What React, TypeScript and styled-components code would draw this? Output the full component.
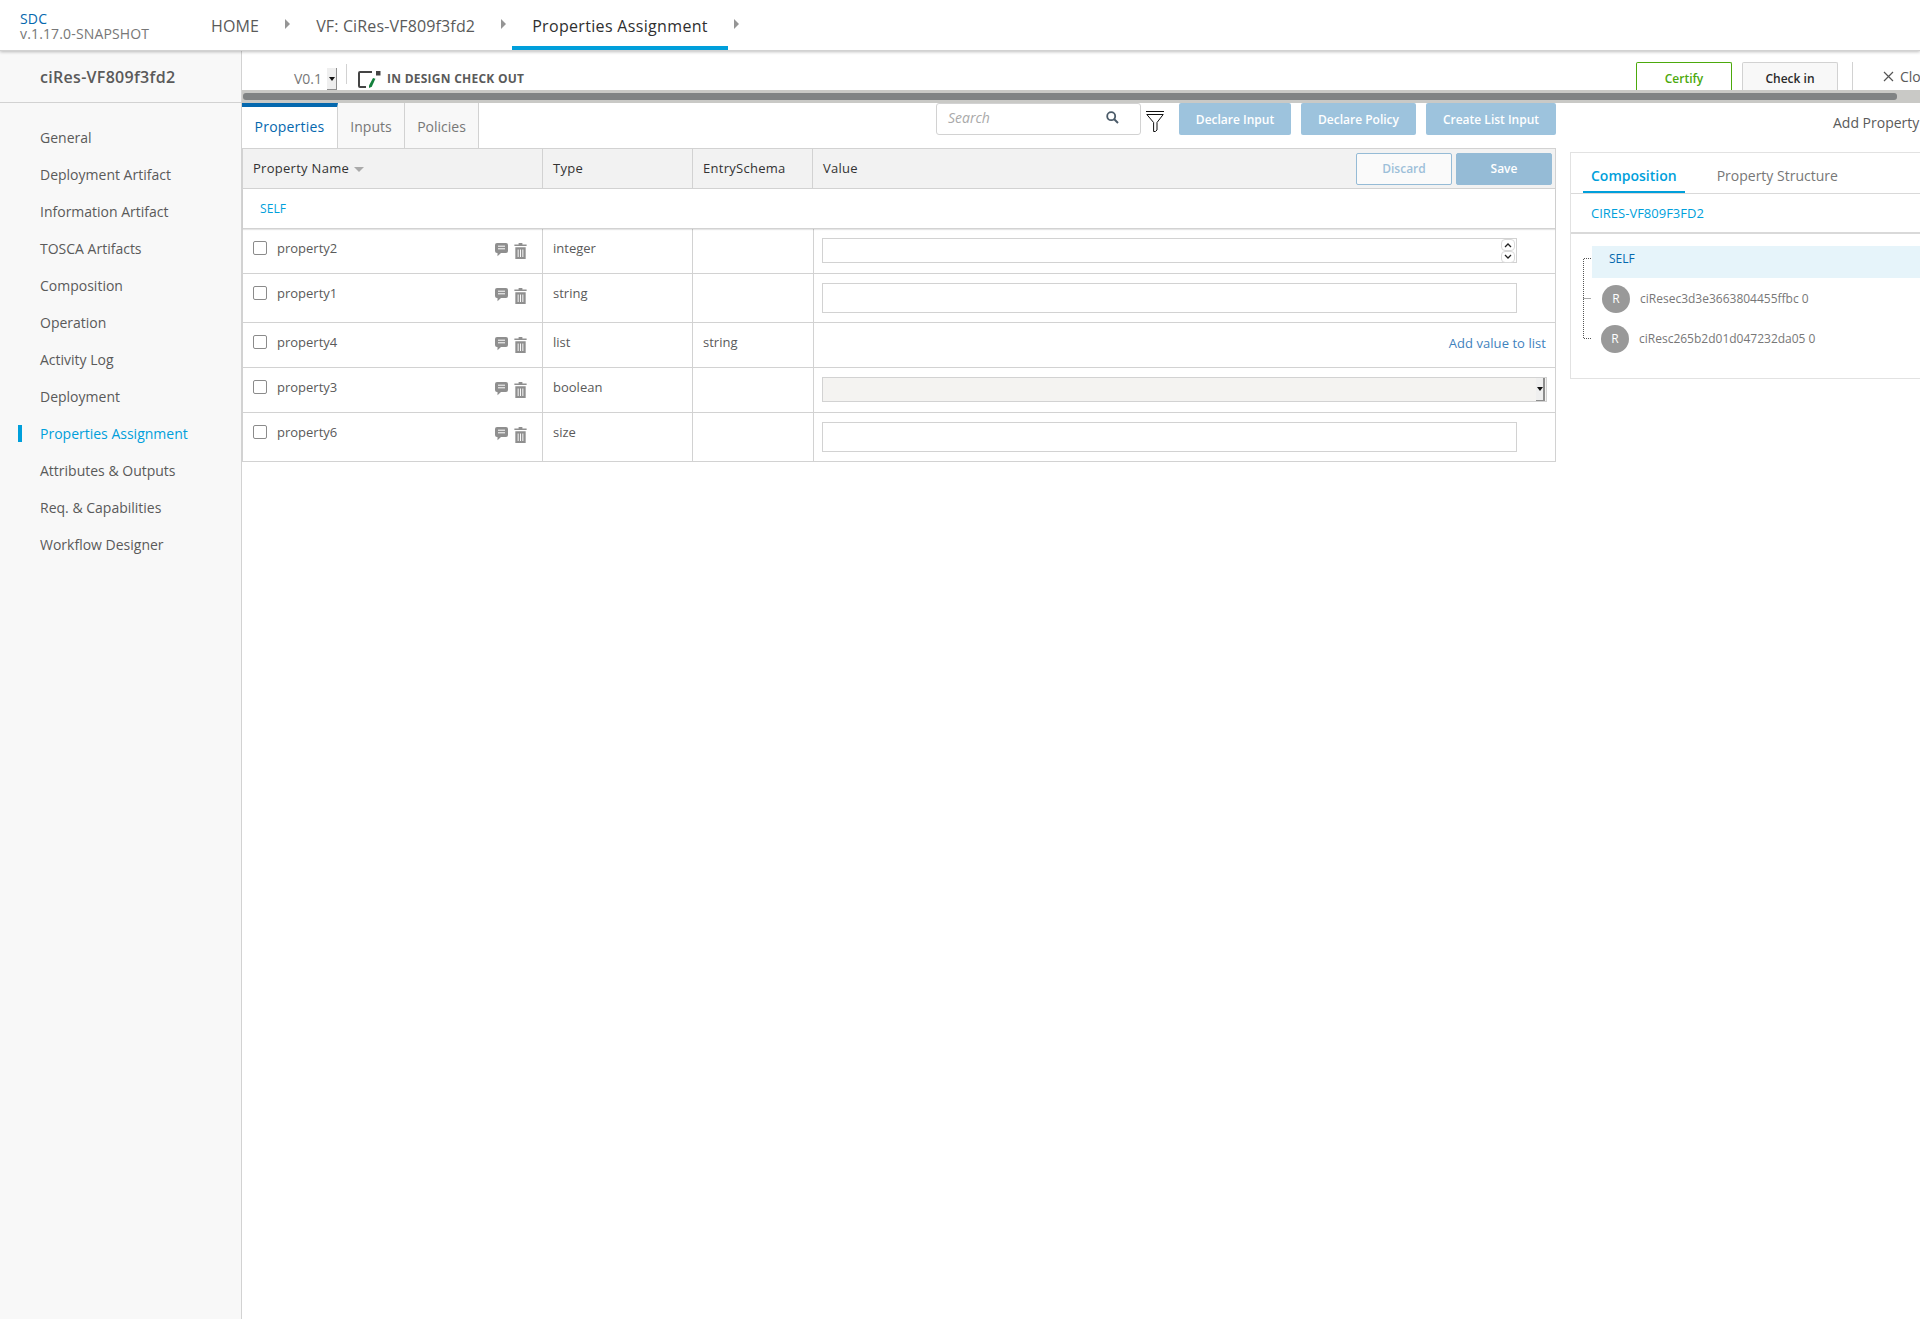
import * as React from "react";
import styled, { createGlobalStyle } from "styled-components";

const GlobalStyle = createGlobalStyle`
  html, body {
    margin: 0;
    height: 1319px;
    overflow: hidden;
    background: white;
    font-family: "Open Sans", "Liberation Sans", sans-serif;
    color: #5a5a5a;
  }
  * { box-sizing: border-box; }
`;

const Page = styled.div`
  width: 1920px;
  height: 1319px;
  overflow: hidden;
  display: flex;
  flex-direction: column;
`;

const Header = styled.header`
  flex: none;
  height: 51px;
  display: flex;
  background: white;
  border-bottom: 1px solid #d2d2d2;
  box-shadow: 0 1px 3px rgba(0, 0, 0, 0.25);
  position: relative;
  z-index: 2;
`;

const Brand = styled.div`
  width: 191px;
  padding: 11px 0 0 20px;
  font-size: 14px;
  line-height: 15px;
  letter-spacing: 0.15px;
  color: #777;
  & b {
    display: block;
    font-weight: 400;
    color: #0568ae;
  }
`;

const Crumb = styled.div<{ $active?: boolean }>`
  height: 50px;
  padding: 5px 20px 0;
  display: flex;
  align-items: center;
  font-size: 16px;
  letter-spacing: ${(p) => (p.$active ? 0.33 : 0.15)}px;
  color: ${(p) => (p.$active ? "#2f2f2f" : "#5a5a5a")};
  border-bottom: 4px solid ${(p) => (p.$active ? "#009fdb" : "transparent")};
`;

const CrumbArrow = styled.span`
  width: 0;
  height: 0;
  margin: 19px 6px 0;
  border-left: 5px solid #959595;
  border-top: 5px solid transparent;
  border-bottom: 5px solid transparent;
`;

const Body = styled.div`
  flex: 1;
  display: flex;
  min-height: 0;
`;

const Sidebar = styled.aside`
  flex: none;
  width: 242px;
  background: #f8f8f8;
  border-right: 1px solid #d2d2d2;
`;

const SideTitle = styled.div`
  height: 52px;
  padding-left: 40px;
  display: flex;
  align-items: center;
  font-size: 16px;
  font-weight: 600;
  letter-spacing: 0.3px;
  color: #5a5a5a;
  border-bottom: 1px solid #d2d2d2;
`;

const SideMenu = styled.nav`
  padding-top: 16px;
`;

const SideItem = styled.div<{ $active?: boolean }>`
  height: 37px;
  padding-left: 40px;
  display: flex;
  align-items: center;
  font-size: 14px;
  position: relative;
  color: ${(p) => (p.$active ? "#009fdb" : "#5a5a5a")};
  &::before {
    content: "";
    display: ${(p) => (p.$active ? "block" : "none")};
    position: absolute;
    left: 18px;
    top: 10px;
    width: 4px;
    height: 17px;
    background: #009fdb;
  }
`;

const Main = styled.main`
  flex: 1;
  min-width: 0;
  display: flex;
  flex-direction: column;
`;

const TopBar = styled.div`
  height: 39px;
  display: flex;
  align-items: flex-end;
`;

const VersionText = styled.div`
  margin-left: 52px;
  height: 22px;
  font-size: 14px;
  line-height: 22px;
  color: #777;
`;

const VersionButton = styled.span`
  width: 10px;
  height: 22px;
  margin-left: 5px;
  background: #efefef;
  border-right: 1px solid #8e8e8e;
  border-bottom: 1px solid #8e8e8e;
  display: flex;
  align-items: center;
  justify-content: center;
  &::after {
    content: "";
    border-top: 4px solid #111;
    border-left: 3px solid transparent;
    border-right: 3px solid transparent;
  }
`;

const TopDivider = styled.span<{ $h: number; $ml: number; $mb: number }>`
  width: 1px;
  height: ${(p) => p.$h}px;
  margin-left: ${(p) => p.$ml}px;
  margin-bottom: ${(p) => p.$mb}px;
  background: #d2d2d2;
`;

const StateIcon = styled.svg`
  width: 24px;
  height: 20px;
  margin-left: 10px;
  margin-bottom: 2px;
`;

const StateText = styled.div`
  margin-left: 6px;
  margin-bottom: 1px;
  font-size: 12px;
  line-height: 20px;
  font-weight: 700;
  letter-spacing: 0.25px;
  color: #5a5a5a;
`;

const TopSpacer = styled.div`
  flex: 1;
`;

const TopButton = styled.div<{ $certify?: boolean }>`
  width: 96px;
  height: 28px;
  margin-right: 10px;
  padding-top: 4px;
  display: flex;
  align-items: center;
  justify-content: center;
  font-size: 12px;
  font-weight: 600;
  border: 1px solid ${(p) => (p.$certify ? "#4ca90c" : "#d2d2d2")};
  border-bottom: 0;
  border-radius: 2px 2px 0 0;
  background: ${(p) => (p.$certify ? "white" : "#f8f8f8")};
  color: ${(p) => (p.$certify ? "#4ca90c" : "#2a2a2a")};
`;

const CloseBox = styled.div`
  width: 67px;
  flex: none;
  height: 28px;
  padding-left: 30px;
  display: flex;
  align-items: center;
  font-size: 14px;
  white-space: nowrap;
  color: #5a5a5a;
  & svg {
    flex: none;
    margin-right: 6px;
  }
`;

const ScrollTrack = styled.div`
  height: 13px;
  padding: 3px 0 0 1px;
  background: #c9c9c6;
`;

const ScrollThumb = styled.div`
  width: 1654px;
  height: 7px;
  border-radius: 3px;
  background: #808384;
`;

const Work = styled.div`
  display: flex;
`;

const Left = styled.section`
  flex: none;
  width: 1314px;
`;

const Toolbar = styled.div`
  height: 45px;
  display: flex;
`;

const Tab = styled.div<{ $active?: boolean; $w: number }>`
  width: ${(p) => p.$w}px;
  padding-top: ${(p) => (p.$active ? 10 : 14)}px;
  text-align: center;
  font-size: 14px;
  line-height: 20px;
  letter-spacing: ${(p) => (p.$active ? 0.2 : 0)}px;
  color: ${(p) => (p.$active ? "#0568ae" : "#777")};
  background: ${(p) => (p.$active ? "white" : "#f8f8f8")};
  border-top: ${(p) => (p.$active ? "4px solid #0568ae" : "0")};
  border-right: 1px solid #d2d2d2;
`;

const ToolActions = styled.div`
  flex: 1;
  display: flex;
  justify-content: flex-end;
  align-items: flex-start;
`;

const SearchBox = styled.div`
  width: 205px;
  height: 32px;
  padding: 0 12px 3px 11px;
  display: flex;
  align-items: center;
  justify-content: space-between;
  border: 1px solid #d2d2d2;
  border-radius: 3px;
  font-size: 14px;
  font-style: italic;
  color: #a9a9a9;
  & svg {
    margin-right: 9px;
  }
`;

const FilterIcon = styled.svg`
  width: 18px;
  height: 21px;
  margin: 8px 5px 0 5px;
`;

const ActionButton = styled.div<{ $w: number }>`
  width: ${(p) => p.$w}px;
  height: 32px;
  margin-left: 10px;
  display: flex;
  align-items: center;
  justify-content: center;
  border-radius: 2px;
  font-size: 12px;
  font-weight: 600;
  color: white;
  background: #9dc3dd;
`;

const Table = styled.div`
  border: 1px solid #d2d2d2;
  border-bottom: 0;
`;

const HeadRow = styled.div`
  height: 40px;
  display: grid;
  grid-template-columns: 300px 150px 120px 1fr;
  background: #f2f2f2;
  border-bottom: 1px solid #d2d2d2;
`;

const HeadCell = styled.div`
  padding: 0 3px 1px 10px;
  display: flex;
  align-items: center;
  font-size: 13px;
  letter-spacing: 0.28px;
  color: #333;
  border-right: 1px solid #d2d2d2;
  &:last-child {
    border-right: 0;
  }
`;

const SortMark = styled.span`
  margin-left: 5px;
  margin-top: 2px;
  border-top: 5px solid #aaa;
  border-left: 5px solid transparent;
  border-right: 5px solid transparent;
`;

const HeadSpacer = styled.span`
  flex: 1;
`;

const HeadButton = styled.div<{ $solid?: boolean }>`
  width: 96px;
  height: 32px;
  margin: 1px 0 0 4px;
  display: flex;
  align-items: center;
  justify-content: center;
  font-size: 12px;
  font-weight: 600;
  letter-spacing: 0;
  border-radius: 2px;
  border: 1px solid #95bbd6;
  color: ${(p) => (p.$solid ? "white" : "#9dbfd9")};
  background: ${(p) => (p.$solid ? "#95bbd6" : "#fafafa")};
`;

const GroupRow = styled.div`
  height: 40px;
  padding-left: 17px;
  display: flex;
  align-items: center;
  font-size: 12px;
  letter-spacing: 0.1px;
  color: #009fdb;
  border-bottom: 1px solid #d2d2d2;
  box-shadow: 0 1px 1px rgba(0, 0, 0, 0.1);
  position: relative;
`;

const Row = styled.div<{ $h: number }>`
  height: ${(p) => p.$h}px;
  display: grid;
  grid-template-columns: 300px 150px 121px 1fr;
  border-bottom: 1px solid #d2d2d2;
  font-size: 13px;
`;

const NameCell = styled.div`
  padding: 9px 15px 0 10px;
  display: flex;
  align-items: flex-start;
  border-right: 1px solid #d2d2d2;
`;

const Check = styled.input.attrs({ type: "checkbox" })`
  appearance: none;
  flex: none;
  width: 14px;
  height: 14px;
  margin: 3px 10px 0 0;
  background: white;
  border: 1px solid #8b8b8b;
  border-radius: 2px;
`;

const PropName = styled.span`
  flex: 1;
  line-height: 20px;
`;

const RowIcons = styled.span`
  display: flex;
  align-items: flex-start;
  gap: 6px;
  padding-top: 5px;
`;

const Cell = styled.div`
  padding: 9px 10px 0 10px;
  line-height: 20px;
  border-right: 1px solid #d2d2d2;
`;

const ValueCell = styled.div<{ $end?: boolean }>`
  padding: 9px 9px 0 8px;
  display: flex;
  justify-content: ${(p) => (p.$end ? "flex-end" : "flex-start")};
  align-items: flex-start;
`;

const ValueInput = styled.input`
  display: block;
  width: 695px;
  height: 30px;
  padding: 0 5px;
  background: white;
  border: 1px solid #d2d2d2;
  border-radius: 0;
  outline: 0;
  font: inherit;
`;

const NumberField = styled.div`
  width: 695px;
  height: 25px;
  padding-right: 1px;
  display: flex;
  align-items: center;
  border: 1px solid #d2d2d2;
`;

const NumberInput = styled.input`
  flex: 1;
  min-width: 0;
  height: 100%;
  padding: 0 5px;
  border: 0;
  outline: 0;
  font: inherit;
`;

const Spinner = styled.span`
  flex: none;
  display: flex;
  flex-direction: column;
`;

const SpinButton = styled.span`
  width: 14px;
  height: 12px;
  display: flex;
  align-items: center;
  justify-content: center;
  border: 1px solid #d9d9d9;
  border-radius: 4px;
`;

const ValueSelect = styled.div`
  width: 725px;
  height: 25px;
  display: flex;
  justify-content: flex-end;
  padding-right: 1px;
  background: #f4f3f1;
  border: 1px solid #d2d2d2;
`;

const SelectButton = styled.span`
  width: 9px;
  background: #efefef;
  border-right: 2px solid #8e8e8e;
  border-bottom: 1px solid #8e8e8e;
  display: flex;
  align-items: center;
  justify-content: center;
  &::after {
    content: "";
    border-top: 4px solid #111;
    border-left: 3px solid transparent;
    border-right: 3px solid transparent;
  }
`;

const AddLink = styled.a`
  margin-top: 1px;
  font-size: 13px;
  line-height: 20px;
  letter-spacing: 0.05px;
  color: #3f82bd;
`;

const Right = styled.aside`
  flex: 1;
  min-width: 0;
  padding-left: 14px;
`;

const AddProperty = styled.div`
  height: 49px;
  padding: 10px 0 0 263px;
  font-size: 14px;
  line-height: 20px;
  white-space: nowrap;
  color: #5a5a5a;
`;

const Panel = styled.div`
  height: 227px;
  width: 352px;
  border: 1px solid #e2e2e2;
`;

const PanelTabs = styled.div`
  height: 41px;
  display: flex;
  padding-left: 12px;
  border-bottom: 1px solid #d9d9d9;
`;

const PanelTab = styled.div<{ $active?: boolean }>`
  padding: ${(p) => (p.$active ? 6 : 4)}px 8px 0;
  margin-right: 24px;
  height: 40px;
  display: flex;
  align-items: center;
  font-size: 14px;
  font-weight: ${(p) => (p.$active ? 600 : 400)};
  color: ${(p) => (p.$active ? "#009fdb" : "#777")};
  border-bottom: ${(p) => (p.$active ? "2px solid #009fdb" : "0")};
`;

const PanelCrumb = styled.div`
  height: 40px;
  padding-left: 20px;
  display: flex;
  align-items: center;
  font-size: 13px;
  color: #009fdb;
  border-bottom: 2px solid #d9d9d9;
`;

const Tree = styled.div`
  padding: 12px 0 0 21px;
  position: relative;
`;

const TreeLines = styled.svg`
  position: absolute;
  left: 12px;
  top: 22px;
  width: 10px;
  height: 84px;
`;

const TreeSelf = styled.div`
  height: 32px;
  padding: 0 0 8px 17px;
  display: flex;
  align-items: center;
  font-size: 12px;
  color: #0568ae;
  background: #e6f4fa;
`;

const TreeNode = styled.div<{ $ml: number }>`
  height: 40px;
  margin-left: ${(p) => p.$ml}px;
  padding: 7px 0 5px;
  display: flex;
  align-items: center;
  font-size: 12px;
  line-height: 18px;
  color: #777;
`;

const NodeBadge = styled.span`
  flex: none;
  width: 28px;
  height: 28px;
  margin-right: 10px;
  border-radius: 50%;
  display: flex;
  align-items: center;
  justify-content: center;
  font-size: 12px;
  color: white;
  background: #999;
`;

const CommentIcon = () => (
  <svg width="13" height="14" viewBox="0 0 13 14">
    <path
      d="M2 0h9a2 2 0 0 1 2 2v6a2 2 0 0 1-2 2H6l-3.5 3.2V10H2a2 2 0 0 1-2-2V2a2 2 0 0 1 2-2z"
      fill="#8f8f8f"
    />
    <path d="M3 3.2h7M3 5.8h7" stroke="white" strokeWidth="1" />
  </svg>
);

const TrashIcon = () => (
  <svg width="13" height="16" viewBox="0 0 13 17">
    <path
      d="M4.5 0h4v1.5H13V3.2H0V1.5h4.5zM1 4.5h11V17H1zM3.5 7v8h1V7zM6 7v8h1V7zM8.5 7v8h1V7z"
      fill="#8f8f8f"
      fillRule="evenodd"
    />
  </svg>
);

const Chevron = ({ up }: { up?: boolean }) => (
  <svg width="8" height="6" viewBox="0 0 8 6">
    <path
      d={up ? "M1 5l3-3 3 3" : "M1 1l3 3 3-3"}
      fill="none"
      stroke="#222"
      strokeWidth="1.3"
    />
  </svg>
);

const menu = [
  "General",
  "Deployment Artifact",
  "Information Artifact",
  "TOSCA Artifacts",
  "Composition",
  "Operation",
  "Activity Log",
  "Deployment",
  "Properties Assignment",
  "Attributes & Outputs",
  "Req. & Capabilities",
  "Workflow Designer",
];

const rows = [
  { name: "property2", type: "integer", h: 45, value: "number" },
  { name: "property1", type: "string", h: 49, value: "text" },
  { name: "property4", type: "list", schema: "string", h: 45, value: "list" },
  { name: "property3", type: "boolean", h: 45, value: "select" },
  { name: "property6", type: "size", h: 49, value: "text" },
];

export default function App() {
  return (
    <Page>
      <GlobalStyle />
      <Header>
        <Brand>
          <b>SDC</b>
          v.1.17.0-SNAPSHOT
        </Brand>
        <Crumb>HOME</Crumb>
        <CrumbArrow />
        <Crumb>VF: CiRes-VF809f3fd2</Crumb>
        <CrumbArrow />
        <Crumb $active>Properties Assignment</Crumb>
        <CrumbArrow />
      </Header>
      <Body>
        <Sidebar>
          <SideTitle>ciRes-VF809f3fd2</SideTitle>
          <SideMenu>
            {menu.map((m) => (
              <SideItem key={m} $active={m === "Properties Assignment"}>
                {m}
              </SideItem>
            ))}
          </SideMenu>
        </Sidebar>
        <Main>
          <TopBar>
            <VersionText>V0.1</VersionText>
            <VersionButton />
            <TopDivider $h={20} $ml={9} $mb={6} />
            <StateIcon viewBox="0 0 24 20">
              <path
                d="M15 4H3a1 1 0 0 0-1 1v13a1 1 0 0 0 1 1h6"
                fill="none"
                stroke="#444"
                strokeWidth="2"
              />
              <rect x="19" y="3" width="4.5" height="4.5" fill="#444" />
              <path d="M16 10l2.4.8-3.6 8-2.8 1.2v-2.6z" fill="#14803c" />
            </StateIcon>
            <StateText>IN DESIGN CHECK OUT</StateText>
            <TopSpacer />
            <TopButton $certify>Certify</TopButton>
            <TopButton>Check in</TopButton>
            <TopDivider $h={28} $ml={4} $mb={0} />
            <CloseBox>
              <svg width="11" height="11" viewBox="0 0 11 11">
                <path
                  d="M1 1l9 9M10 1l-9 9"
                  stroke="#555"
                  strokeWidth="1.2"
                  fill="none"
                />
              </svg>
              Close
            </CloseBox>
          </TopBar>
          <ScrollTrack>
            <ScrollThumb />
          </ScrollTrack>
          <Work>
            <Left>
              <Toolbar>
                <Tab $active $w={96}>
                  Properties
                </Tab>
                <Tab $w={67}>Inputs</Tab>
                <Tab $w={74}>Policies</Tab>
                <ToolActions>
                  <SearchBox>
                    Search
                    <svg width="13" height="13" viewBox="0 0 13 13">
                      <circle
                        cx="5.2"
                        cy="5.2"
                        r="4"
                        fill="none"
                        stroke="#4a5a68"
                        strokeWidth="1.8"
                      />
                      <path d="M8 8l4 4" stroke="#4a5a68" strokeWidth="2" />
                    </svg>
                  </SearchBox>
                  <FilterIcon viewBox="0 0 18 21">
                    <path d="M0 .5h18" stroke="#111" strokeWidth="1" />
                    <path
                      d="M.8 3.5h16.4L11 11.5V19l-1.6 1.5H7.6V11.5z"
                      fill="white"
                      stroke="#111"
                      strokeWidth="1"
                    />
                  </FilterIcon>
                  <ActionButton $w={112}>Declare Input</ActionButton>
                  <ActionButton $w={115}>Declare Policy</ActionButton>
                  <ActionButton $w={130}>Create List Input</ActionButton>
                </ToolActions>
              </Toolbar>
              <Table>
                <HeadRow>
                  <HeadCell>
                    Property Name
                    <SortMark />
                  </HeadCell>
                  <HeadCell>Type</HeadCell>
                  <HeadCell>EntrySchema</HeadCell>
                  <HeadCell>
                    Value
                    <HeadSpacer />
                    <HeadButton>Discard</HeadButton>
                    <HeadButton $solid>Save</HeadButton>
                  </HeadCell>
                </HeadRow>
                <GroupRow>SELF</GroupRow>
                {rows.map((r) => (
                  <Row key={r.name} $h={r.h}>
                    <NameCell>
                      <Check />
                      <PropName>{r.name}</PropName>
                      <RowIcons>
                        <CommentIcon />
                        <TrashIcon />
                      </RowIcons>
                    </NameCell>
                    <Cell>{r.type}</Cell>
                    <Cell>{r.schema}</Cell>
                    <ValueCell $end={r.value === "list"}>
                      {r.value === "number" && (
                        <NumberField>
                          <NumberInput type="text" />
                          <Spinner>
                            <SpinButton>
                              <Chevron up />
                            </SpinButton>
                            <SpinButton>
                              <Chevron />
                            </SpinButton>
                          </Spinner>
                        </NumberField>
                      )}
                      {r.value === "text" && <ValueInput type="text" />}
                      {r.value === "list" && (
                        <AddLink>Add value to list</AddLink>
                      )}
                      {r.value === "select" && (
                        <ValueSelect>
                          <SelectButton />
                        </ValueSelect>
                      )}
                    </ValueCell>
                  </Row>
                ))}
              </Table>
            </Left>
            <Right>
              <AddProperty>Add Property</AddProperty>
              <Panel>
                <PanelTabs>
                  <PanelTab $active>Composition</PanelTab>
                  <PanelTab>Property Structure</PanelTab>
                </PanelTabs>
                <PanelCrumb>CIRES-VF809F3FD2</PanelCrumb>
                <Tree>
                  <TreeLines viewBox="0 0 10 84">
                    <path
                      d="M8 2.5H.5v80H8M.5 42.5H8"
                      fill="none"
                      stroke="#555"
                      strokeDasharray="1 1"
                    />
                  </TreeLines>
                  <TreeSelf>SELF</TreeSelf>
                  <TreeNode $ml={10}>
                    <NodeBadge>R</NodeBadge>
                    ciResec3d3e3663804455ffbc 0
                  </TreeNode>
                  <TreeNode $ml={9}>
                    <NodeBadge>R</NodeBadge>
                    ciResc265b2d01d047232da05 0
                  </TreeNode>
                </Tree>
              </Panel>
            </Right>
          </Work>
        </Main>
      </Body>
    </Page>
  );
}
